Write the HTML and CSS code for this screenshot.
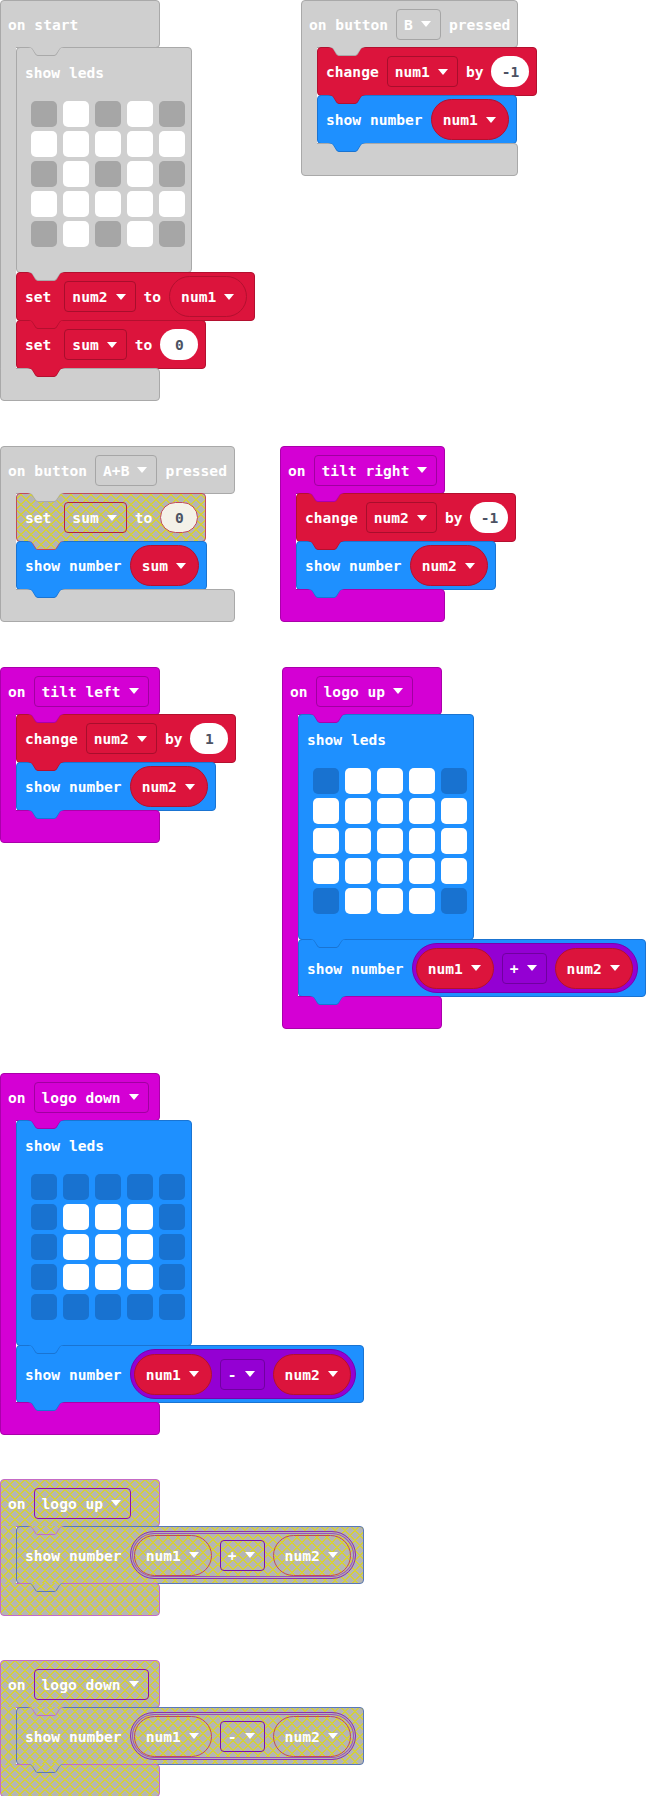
FILE: index.html
```html
<!DOCTYPE html>
<html>

<head>
  <title>Blocks</title>
  <link rel="stylesheet" href="styles.css">
</head>

<body>
  <section class="canvas">

    <!-- on start -->
    <div class="ev grey ev-start">
      <div class="hat"><span>on start</span></div>
      <div class="body">
        <div class="arm"></div>
        <div class="stack">
          <div class="stmt leds grey">
            <div class="lbl">show leds</div>
            <div class="grid">
              <span class="led"></span><span class="led lit"></span><span class="led"></span><span class="led lit"></span><span class="led"></span>
              <span class="led lit"></span><span class="led lit"></span><span class="led lit"></span><span class="led lit"></span><span class="led lit"></span>
              <span class="led"></span><span class="led lit"></span><span class="led"></span><span class="led lit"></span><span class="led"></span>
              <span class="led lit"></span><span class="led lit"></span><span class="led lit"></span><span class="led lit"></span><span class="led lit"></span>
              <span class="led"></span><span class="led lit"></span><span class="led"></span><span class="led lit"></span><span class="led"></span>
            </div>
          </div>
          <div class="stmt red">
            <span class="set">set</span>
            <span class="dd">num2<i class="arr"></i></span>
            <span>to</span>
            <span class="var">num1<i class="arr"></i></span>
          </div>
          <div class="stmt red">
            <span class="set">set</span>
            <span class="dd">sum<i class="arr"></i></span>
            <span>to</span>
            <span class="num">0</span>
          </div>
        </div>
      </div>
      <div class="foot"></div>
    </div>

    <!-- on button B pressed -->
    <div class="ev grey ev-b">
      <div class="hat">
        <span>on button</span>
        <span class="dd">B<i class="arr"></i></span>
        <span>pressed</span>
      </div>
      <div class="body">
        <div class="arm"></div>
        <div class="stack">
          <div class="stmt red">
            <span>change</span>
            <span class="dd">num1<i class="arr"></i></span>
            <span>by</span>
            <span class="num">-1</span>
          </div>
          <div class="stmt blue">
            <span>show number</span>
            <span class="var">num1<i class="arr"></i></span>
          </div>
        </div>
      </div>
      <div class="foot"></div>
    </div>

    <!-- on button A+B pressed -->
    <div class="ev grey ev-ab">
      <div class="hat">
        <span>on button</span>
        <span class="dd">A+B<i class="arr"></i></span>
        <span>pressed</span>
      </div>
      <div class="body">
        <div class="arm"></div>
        <div class="stack">
          <div class="stmt h-red">
            <span class="set">set</span>
            <span class="dd">sum<i class="arr"></i></span>
            <span>to</span>
            <span class="num h-num">0</span>
          </div>
          <div class="stmt blue">
            <span>show number</span>
            <span class="var">sum<i class="arr"></i></span>
          </div>
        </div>
      </div>
      <div class="foot"></div>
    </div>

    <!-- on tilt right -->
    <div class="ev mag ev-tr">
      <div class="hat">
        <span>on</span>
        <span class="dd">tilt right<i class="arr"></i></span>
      </div>
      <div class="body">
        <div class="arm"></div>
        <div class="stack">
          <div class="stmt red">
            <span>change</span>
            <span class="dd">num2<i class="arr"></i></span>
            <span>by</span>
            <span class="num">-1</span>
          </div>
          <div class="stmt blue">
            <span>show number</span>
            <span class="var">num2<i class="arr"></i></span>
          </div>
        </div>
      </div>
      <div class="foot"></div>
    </div>

    <!-- on tilt left -->
    <div class="ev mag ev-tl">
      <div class="hat">
        <span>on</span>
        <span class="dd">tilt left<i class="arr"></i></span>
      </div>
      <div class="body">
        <div class="arm"></div>
        <div class="stack">
          <div class="stmt red">
            <span>change</span>
            <span class="dd">num2<i class="arr"></i></span>
            <span>by</span>
            <span class="num">1</span>
          </div>
          <div class="stmt blue">
            <span>show number</span>
            <span class="var">num2<i class="arr"></i></span>
          </div>
        </div>
      </div>
      <div class="foot"></div>
    </div>

    <!-- on logo up -->
    <div class="ev mag ev-lu">
      <div class="hat">
        <span>on</span>
        <span class="dd">logo up<i class="arr"></i></span>
      </div>
      <div class="body">
        <div class="arm"></div>
        <div class="stack">
          <div class="stmt leds blue">
            <div class="lbl">show leds</div>
            <div class="grid">
              <span class="led"></span><span class="led lit"></span><span class="led lit"></span><span class="led lit"></span><span class="led"></span>
              <span class="led lit"></span><span class="led lit"></span><span class="led lit"></span><span class="led lit"></span><span class="led lit"></span>
              <span class="led lit"></span><span class="led lit"></span><span class="led lit"></span><span class="led lit"></span><span class="led lit"></span>
              <span class="led lit"></span><span class="led lit"></span><span class="led lit"></span><span class="led lit"></span><span class="led lit"></span>
              <span class="led"></span><span class="led lit"></span><span class="led lit"></span><span class="led lit"></span><span class="led"></span>
            </div>
          </div>
          <div class="stmt blue tall">
            <span>show number</span>
            <span class="math">
              <span class="var">num1<i class="arr"></i></span>
              <span class="dd">+<i class="arr"></i></span>
              <span class="var">num2<i class="arr"></i></span>
            </span>
          </div>
        </div>
      </div>
      <div class="foot"></div>
    </div>

    <!-- on logo down -->
    <div class="ev mag ev-ld">
      <div class="hat">
        <span>on</span>
        <span class="dd">logo down<i class="arr"></i></span>
      </div>
      <div class="body">
        <div class="arm"></div>
        <div class="stack">
          <div class="stmt leds blue">
            <div class="lbl">show leds</div>
            <div class="grid">
              <span class="led"></span><span class="led"></span><span class="led"></span><span class="led"></span><span class="led"></span>
              <span class="led"></span><span class="led lit"></span><span class="led lit"></span><span class="led lit"></span><span class="led"></span>
              <span class="led"></span><span class="led lit"></span><span class="led lit"></span><span class="led lit"></span><span class="led"></span>
              <span class="led"></span><span class="led lit"></span><span class="led lit"></span><span class="led lit"></span><span class="led"></span>
              <span class="led"></span><span class="led"></span><span class="led"></span><span class="led"></span><span class="led"></span>
            </div>
          </div>
          <div class="stmt blue tall">
            <span>show number</span>
            <span class="math">
              <span class="var">num1<i class="arr"></i></span>
              <span class="dd">-<i class="arr"></i></span>
              <span class="var">num2<i class="arr"></i></span>
            </span>
          </div>
        </div>
      </div>
      <div class="foot"></div>
    </div>

    <!-- disabled: on logo up -->
    <div class="ev h-mag ev-lu2">
      <div class="hat">
        <span>on</span>
        <span class="dd">logo up<i class="arr"></i></span>
      </div>
      <div class="body">
        <div class="arm"></div>
        <div class="stack">
          <div class="stmt h-blue tall">
            <span>show number</span>
            <span class="math h-pur">
              <span class="var h-red">num1<i class="arr"></i></span>
              <span class="dd">+<i class="arr"></i></span>
              <span class="var h-red">num2<i class="arr"></i></span>
            </span>
          </div>
        </div>
      </div>
      <div class="foot"></div>
    </div>

    <!-- disabled: on logo down -->
    <div class="ev h-mag ev-ld2">
      <div class="hat">
        <span>on</span>
        <span class="dd">logo down<i class="arr"></i></span>
      </div>
      <div class="body">
        <div class="arm"></div>
        <div class="stack">
          <div class="stmt h-blue tall">
            <span>show number</span>
            <span class="math h-pur">
              <span class="var h-red">num1<i class="arr"></i></span>
              <span class="dd">-<i class="arr"></i></span>
              <span class="var h-red">num2<i class="arr"></i></span>
            </span>
          </div>
        </div>
      </div>
      <div class="foot"></div>
    </div>

  </section>
</body>

</html>
```

FILE: styles.css
```css
* {
    margin: 0;
    padding: 0;
    box-sizing: border-box;
}
:root {
    --hatch: repeating-linear-gradient(45deg, #d4cf3a 0 1px, transparent 1px 7.07px),
             repeating-linear-gradient(-45deg, #d4cf3a 0 1px, transparent 1px 7.07px),
             #b5b5b3;
}
body {
    background: #ffffff;
    color: #ffffff;
    font-family: "DejaVu Sans Mono", monospace;
    font-weight: bold;
    font-size: 14.6px;
}
.canvas {
    position: relative;
    width: 646px;
    height: 1796px;
    overflow: hidden;
}

/* colours */
.grey { --fill: #cfcfcf; --line: #a9a9a9; --dd: #a6a6a6; --led: #a6a6a6; }
.red  { --fill: #dc143c; --line: #b3102f; --dd: #a80e2c; }
.blue { --fill: #1e90ff; --line: #1a74d2; --led: #1872d0; }
.mag  { --fill: #d400d4; --line: #aa00aa; --dd: #a000a0; }

/* event blocks, placed on the workspace */
.ev {
    position: absolute;
    display: flex;
    flex-direction: column;
    width: max-content;
    min-width: 160px;
}
.ev-start { left: 0; top: 0; }
.ev-b { left: 301px; top: 0; }
.ev-ab { left: 0; top: 446px; }
.ev-tr { left: 280px; top: 446px; }
.ev-tl { left: 0; top: 667px; }
.ev-lu { left: 282px; top: 667px; }
.ev-ld { left: 0; top: 1073px; }
.ev-lu2 { left: 0; top: 1479px; }
.ev-ld2 { left: 0; top: 1660px; }

.hat {
    position: relative;
    display: flex;
    align-items: center;
    gap: 8px;
    height: 48px;
    padding: 0 7px;
    background: var(--fill);
    border: 1px solid var(--line);
    border-radius: 4px 4px 4px 0;
}
.body {
    display: flex;
    margin-top: -1px;
}
.arm {
    position: relative;
    width: 16px;
    flex-shrink: 0;
    background: var(--fill);
    border-left: 1px solid var(--line);
}
.stack {
    width: 0;
}
.foot {
    position: relative;
    height: 33px;
    margin-top: -1px;
    background: var(--fill);
    border: 1px solid var(--line);
    border-radius: 0 4px 4px 4px;
}
.foot::before {
    content: "";
    position: absolute;
    left: 0;
    top: -1px;
    width: 15px;
    height: 1px;
    background: var(--fill);
}

/* statement blocks */
.stmt {
    position: relative;
    display: flex;
    align-items: center;
    gap: 8px;
    width: max-content;
    height: 49px;
    margin-top: -1px;
    padding: 0 7px 0 8px;
    background: var(--fill);
    border: 1px solid var(--line);
    border-radius: 4px;
}
.stack > .stmt:first-child {
    margin-top: 0;
}
.stmt.tall {
    height: 58px;
}
.set {
    margin-right: 5px;
}

/* the tab under each block */
.hat::before, .hat::after,
.stmt::before, .stmt::after {
    content: "";
    position: absolute;
    top: 100%;
    left: 10px;
    width: 38px;
    height: 10px;
    z-index: 1;
}
.hat::before, .hat::after {
    left: 26px;
}
.hat::before, .stmt::before {
    background: var(--line);
    clip-path: path("M0 0 C3 0 4 1 5 2 L8 7 C9 8.5 10 9 12 9 H26 C28 9 29 8.5 30 7 L33 2 C34 1 35 0 38 0 Z");
}
.hat::after, .stmt::after {
    background: var(--fill);
    clip-path: path("M1 0 C3.5 0 4.5 0.8 5.5 1.8 L8.6 6.4 C9.4 7.6 10.3 8 12 8 H26 C27.7 8 28.6 7.6 29.4 6.4 L32.5 1.8 C33.5 0.8 34.5 0 37 0 Z");
}

/* show leds */
.stmt.leds {
    display: block;
    width: 176px;
    height: 226px;
    padding: 15px 8px 0;
}
.lbl {
    line-height: 20px;
}
.grid {
    display: grid;
    grid-template-columns: repeat(5, 26px);
    grid-auto-rows: 26px;
    gap: 4px 6px;
    margin: 18px 0 0 6px;
}
.led {
    border-radius: 5px;
    background: var(--led);
}
.led.lit {
    background: #ffffff;
}

/* fields */
.dd {
    display: flex;
    align-items: center;
    gap: 8px;
    height: 31px;
    padding: 0 9px 0 7px;
    border: 1px solid var(--dd);
    border-radius: 4px;
}
.arr {
    width: 0;
    height: 0;
    border-left: 5px solid transparent;
    border-right: 5px solid transparent;
    border-top: 6px solid #ffffff;
}
.var {
    --fill: #dc143c;
    --line: #b3102f;
    display: flex;
    align-items: center;
    gap: 8px;
    height: 41px;
    padding: 0 12px 0 11px;
    background: var(--fill);
    border: 1px solid var(--line);
    border-radius: 21px;
}
.num {
    display: flex;
    align-items: center;
    justify-content: center;
    min-width: 38px;
    height: 31px;
    padding: 0 8px;
    background: #ffffff;
    color: #4c5263;
    border-radius: 16px;
}
.math {
    --fill: #9400d3;
    --line: #7a00ae;
    --dd: #7000a0;
    display: flex;
    align-items: center;
    gap: 8px;
    height: 50px;
    padding: 0 4px 0 3px;
    background: var(--fill);
    border: 1px solid var(--line);
    border-radius: 25px;
}

/* disabled blocks */
.h-mag  { --fill: var(--hatch); --line: #c56ac5; --dd: #8e10a4; }
.h-blue { --fill: var(--hatch); --line: #5a78b8; }
.h-red  { --fill: var(--hatch); --line: #c24a5a; --dd: #b8203c; }
.h-pur  { --fill: var(--hatch); --line: #8a32b2; --dd: #7a10aa; }
.math.h-pur {
    height: 48px;
    box-shadow: inset 0 0 0 1px #b5b5b3, inset 0 0 0 2px #9a50bb;
}
.num.h-num {
    background: #f4f1e8;
    border: 1px solid #c24a5a;
}
```
